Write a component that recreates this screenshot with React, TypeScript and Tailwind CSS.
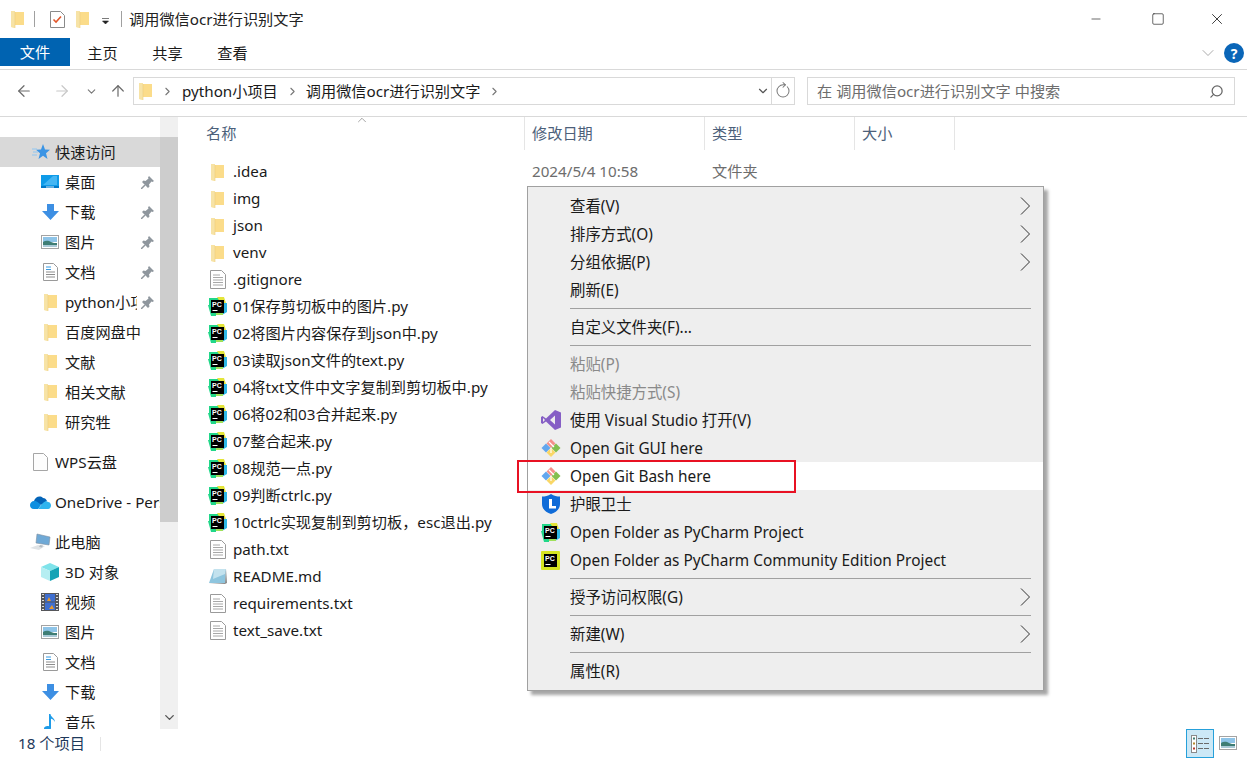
import { ChevronDown, ChevronRight, ChevronUp, ArrowLeft, ArrowRight, ArrowUp, RotateCw, Search, Minus, X, Square } from "lucide-react";

function FolderIcon({ className = "" }: { className?: string }) {
  return (
    <svg width="13" height="18" viewBox="0 0 13 18" className={className}>
      <path d="M0 1h4v1h9v13H4v3l-4-1z" fill="#fbe7ad" />
      <path d="M4 2h9v13H4z" fill="#fbdc8a" />
      <path d="M0 1h4v17l-4-1z" fill="#f7e3a6" />
      <path d="M4 2v16" stroke="#eccf7d" strokeWidth=".6" />
    </svg>
  );
}

function TextFileIcon() {
  return (
    <svg width="16" height="19" viewBox="0 0 16 19">
      <path d="M.5.5h11l4 4v14H.5z" fill="#fff" stroke="#9a9a9a" />
      <path d="M3 5h7M3 7.5h10M3 10h10M3 12.5h10M3 15h10" stroke="#a8a8a8" />
    </svg>
  );
}

function PyCharmIcon({ community = false }: { community?: boolean }) {
  return (
    <svg width="19" height="19" viewBox="0 0 19 19">
      {community ? (
        <rect x="0" y="0" width="19" height="19" rx="1" fill="#d6e421" />
      ) : (
        <>
          <path d="M1 1h10v10H1z" fill="#21d789" />
          <path d="M9 0h7l2 6-4 2z" fill="#e4e53a" />
          <path d="M13 6h6v9l-5 3z" fill="#2fb8e6" />
          <path d="M0 8h8v11H3z" fill="#21d789" />
          <path d="M8 15h7v3H8z" fill="#9fe05a" />
        </>
      )}
      <rect x="3" y="3" width="13" height="13" fill="#000" />
      <text x="4" y="10" fontSize="7" fontWeight="700" fill="#fff" fontFamily="Liberation Sans, sans-serif">PC</text>
      <rect x="4.500" y="13" width="5" height="1" fill="#fff" />
    </svg>
  );
}

function ReadmeIcon() {
  return (
    <svg width="19" height="17" viewBox="0 0 19 17">
      <path d="M6 1h12l-1 14H1z" fill="#8ec5de" />
      <path d="M6 1h12l-1 5-12 5z" fill="#c3e2ee" />
      <path d="M18 1l1 14-2 1H1l16-1z" fill="#8a8a8a" />
    </svg>
  );
}

function GitIcon() {
  return (
    <svg width="20" height="20" viewBox="0 0 20 20">
      <path d="M10 1l4.500 4.500-4.500 4.500-4.500-4.500z" fill="#f4908a" />
      <path d="M5 5.500l4.500 4.500L5 14.500.5 10z" fill="#62a7ee" />
      <path d="M15 5.500l4.500 4.500-4.500 4.500-4.500-4.500z" fill="#83bf4f" />
      <path d="M10 10l4.500 4.500L10 19l-4.500-4.500z" fill="#f9d767" />
      <path d="M8 4l5 5M10 10l0 5" stroke="#fff" strokeWidth="1.200" />
    </svg>
  );
}

function VisualStudioIcon() {
  return (
    <svg width="20" height="20" viewBox="0 0 20 20">
      <path d="M14 0l6 2.500v15L14 20 5 11.500 1.500 14 0 13V7l1.500-1L5 8.500zM14 5.500L9 10l5 4.500zM2 8v4l2-2z" fill="#865fc5" />
    </svg>
  );
}

function EyeGuardIcon() {
  return (
    <svg width="18" height="20" viewBox="0 0 18 20">
      <path d="M9 0c3 2 6 2.500 9 2.500V10c0 5-4 8.500-9 10-5-1.500-9-5-9-10V2.500C3 2.500 6 2 9 0z" fill="#0f6bd8" />
      <path d="M7 5h3v7h4v2.500H7z" fill="#fff" />
    </svg>
  );
}

function StarIcon() {
  return (
    <svg width="18" height="16" viewBox="0 0 18 16">
      <path d="M11 0l2 5.500 5 .3-4 3.400 1.500 5.800-4.500-3.200L6.500 15 8 9.200 4 5.800l5-.3z" fill="#3b94e4" />
      <path d="M0 5h5M1 8h5M0 11h5" stroke="#8fc6f2" />
    </svg>
  );
}

function DesktopIcon() {
  return (
    <svg width="18" height="14" viewBox="0 0 18 14">
      <rect width="18" height="13" fill="#0f9be8" />
      <path d="M2 10L12 1h4v9z" fill="#45b6f3" />
      <rect x="0" y="11" width="18" height="2" fill="#0078c8" />
      <rect x="5" y="11.500" width="8" height="1" fill="#cfeaf9" />
    </svg>
  );
}

function DownloadIcon() {
  return (
    <svg width="17" height="16" viewBox="0 0 17 16">
      <path d="M5 0h7v7h5l-8.500 9L0 7h5z" fill="#3d8fe3" />
    </svg>
  );
}

function PictureIcon() {
  return (
    <svg width="18" height="14" viewBox="0 0 18 14">
      <rect x=".5" y=".5" width="17" height="13" fill="#fff" stroke="#a3a3a3" />
      <rect x="2" y="2" width="14" height="5" fill="#8ec4e8" />
      <path d="M2 7c3-2 6-1 8 0s4 1 6 1v4H2z" fill="#3e7d74" />
      <path d="M2 10h14v2H2z" fill="#a9c9d6" />
    </svg>
  );
}

function DocsIcon() {
  return (
    <svg width="15" height="18" viewBox="0 0 15 18">
      <path d="M.5.500h10l4 4v13H.5z" fill="#fff" stroke="#9a9a9a" />
      <path d="M3 4h5M3 6.500h5" stroke="#3a9be0" />
      <path d="M3 9h9M3 11.500h9M3 14h9" stroke="#8d8d8d" />
    </svg>
  );
}

function WpsIcon() {
  return (
    <svg width="15" height="18" viewBox="0 0 15 18">
      <path d="M.5.500h10l4 4v13H.5z" fill="#fdfdfd" stroke="#a6a6a6" />
    </svg>
  );
}

function OneDriveIcon() {
  return (
    <svg width="21" height="13" viewBox="0 0 21 13">
      <path d="M4 5c1-4 6-6 9-3 2 0 3 1 4 3l-6 4z" fill="#0364b8" />
      <path d="M4 13C1 13 0 11 0 9s2-4 4-4c2-.500 4 1 7 4l-3 4z" fill="#0f8fe0" />
      <path d="M8 13l5-6c2-2 4-2 5-1 2 0 3 2 3 3.500S20 13 18 13z" fill="#2fb4ef" />
    </svg>
  );
}

function PcIcon() {
  return (
    <svg width="21" height="18" viewBox="0 0 21 18">
      <path d="M7 1l13 3-1 8-13-2z" fill="#6fa9d6" stroke="#7d8fa0" strokeWidth=".6" />
      <path d="M0 15l8-3 7 1-6 4z" fill="#dfe3e6" />
      <path d="M10 12l3 .500-1 2-3-.500z" fill="#b7bec3" />
    </svg>
  );
}

function CubeIcon() {
  return (
    <svg width="18" height="18" viewBox="0 0 18 18">
      <path d="M9 0l9 4-9 4-9-4z" fill="#7fe3ea" />
      <path d="M0 4l9 4v10l-9-4z" fill="#b5eef2" />
      <path d="M18 4L9 8v10l9-4z" fill="#14a3b5" />
    </svg>
  );
}

function FilmIcon() {
  return (
    <svg width="18" height="18" viewBox="0 0 18 18">
      <rect width="18" height="18" fill="#55565a" />
      <path d="M1 1.500h2M1 4.500h2M1 7.500h2M1 10.500h2M1 13.500h2M1 16.500h2M15 1.500h2M15 4.500h2M15 7.500h2M15 10.500h2M15 13.500h2M15 16.500h2" stroke="#ddd" />
      <rect x="4" y="1" width="10" height="7.500" fill="#3f6fd0" />
      <rect x="4" y="9.500" width="10" height="7.500" fill="#3f6fd0" />
      <path d="M6 8l2-4 2 4zM8 16l3-4 2 4z" fill="#e89a2e" />
    </svg>
  );
}

function MusicIcon() {
  return (
    <svg width="12" height="17" viewBox="0 0 12 17">
      <path d="M5 0h1.500c0 3 4.500 4 4.500 8-1-2-2.500-3-4-3.300V14c0 1.700-1.600 3-3.500 3S0 16 0 14.500 1.600 12 3.500 12c.500 0 1 .100 1.500.300z" fill="#1e9be8" />
    </svg>
  );
}

function PinIcon() {
  return (
    <svg width="13" height="13" viewBox="0 0 13 13" className="ml-[4px] shrink-0">
      <path d="M8 0l5 5-1.500 1-1-.5L8 8.500l.5 2L7 12 1 6l1.500-1.500 2 .5L7.500 2.500 7 1.500z" fill="#8f979e" />
      <path d="M4 9l-4 4" stroke="#8f979e" strokeWidth="1.500" />
    </svg>
  );
}

function MenuArrow() {
  return (
    <svg width="10" height="18" viewBox="0 0 10 18" className="mr-[13px]">
      <path d="M1 .500L9.500 9 1 17.500" fill="none" stroke="#333" strokeWidth="1" />
    </svg>
  );
}

type NavRow = { label: string; icon: React.ReactNode; pinned?: boolean; top?: boolean; active?: boolean; gap?: boolean };

const navRows: NavRow[] = [
  { label: "快速访问", icon: <StarIcon />, top: true, active: true },
  { label: "桌面", icon: <DesktopIcon />, pinned: true },
  { label: "下载", icon: <DownloadIcon />, pinned: true },
  { label: "图片", icon: <PictureIcon />, pinned: true },
  { label: "文档", icon: <DocsIcon />, pinned: true },
  { label: "python小项目", icon: <FolderIcon />, pinned: true },
  { label: "百度网盘中", icon: <FolderIcon /> },
  { label: "文献", icon: <FolderIcon /> },
  { label: "相关文献", icon: <FolderIcon /> },
  { label: "研究牲", icon: <FolderIcon /> },
  { label: "WPS云盘", icon: <WpsIcon />, top: true, gap: true },
  { label: "OneDrive - Personal", icon: <OneDriveIcon />, top: true, gap: true },
  { label: "此电脑", icon: <PcIcon />, top: true, gap: true },
  { label: "3D 对象", icon: <CubeIcon /> },
  { label: "视频", icon: <FilmIcon /> },
  { label: "图片", icon: <PictureIcon /> },
  { label: "文档", icon: <DocsIcon /> },
  { label: "下载", icon: <DownloadIcon /> },
  { label: "音乐", icon: <MusicIcon /> },
];

const files: { name: string; icon: React.ReactNode }[] = [
  { name: ".idea", icon: <FolderIcon /> },
  { name: "img", icon: <FolderIcon /> },
  { name: "json", icon: <FolderIcon /> },
  { name: "venv", icon: <FolderIcon /> },
  { name: ".gitignore", icon: <TextFileIcon /> },
  { name: "01保存剪切板中的图片.py", icon: <PyCharmIcon /> },
  { name: "02将图片内容保存到json中.py", icon: <PyCharmIcon /> },
  { name: "03读取json文件的text.py", icon: <PyCharmIcon /> },
  { name: "04将txt文件中文字复制到剪切板中.py", icon: <PyCharmIcon /> },
  { name: "06将02和03合并起来.py", icon: <PyCharmIcon /> },
  { name: "07整合起来.py", icon: <PyCharmIcon /> },
  { name: "08规范一点.py", icon: <PyCharmIcon /> },
  { name: "09判断ctrlc.py", icon: <PyCharmIcon /> },
  { name: "10ctrlc实现复制到剪切板，esc退出.py", icon: <PyCharmIcon /> },
  { name: "path.txt", icon: <TextFileIcon /> },
  { name: "README.md", icon: <ReadmeIcon /> },
  { name: "requirements.txt", icon: <TextFileIcon /> },
  { name: "text_save.txt", icon: <TextFileIcon /> },
];

function MenuItem({ label, icon, arrow, disabled, active }: { label: string; icon?: React.ReactNode; arrow?: boolean; disabled?: boolean; active?: boolean }) {
  return (
    <div className={`flex h-7 items-center ${active ? "bg-white" : ""}`}>
      <div className="flex w-[42px] shrink-0 items-center justify-center pl-[3px]">{icon}</div>
      <span className={`flex-1 whitespace-nowrap pt-[2px] ${disabled ? "text-[#8a8a8a]" : "text-[#1a1a1a]"}`}>{label}</span>
      {arrow && <MenuArrow />}
    </div>
  );
}

function MenuSep() {
  return (
    <div className="flex h-[9px] items-center pl-[42px] pr-[12px]">
      <div className="h-px w-full bg-[#a0a0a0]" />
    </div>
  );
}

function ContextMenu() {
  return (
    <div className="absolute left-[527px] top-[186px] w-[517px] border border-[#a0a0a0] bg-[#eeeeee] py-[5px] text-[15.4px] shadow-[4px_4px_3px_rgba(0,0,0,0.35)]">
      <MenuItem label="查看(V)" arrow />
      <MenuItem label="排序方式(O)" arrow />
      <MenuItem label="分组依据(P)" arrow />
      <MenuItem label="刷新(E)" />
      <MenuSep />
      <MenuItem label="自定义文件夹(F)..." />
      <MenuSep />
      <MenuItem label="粘贴(P)" disabled />
      <MenuItem label="粘贴快捷方式(S)" disabled />
      <MenuItem label="使用 Visual Studio 打开(V)" icon={<VisualStudioIcon />} />
      <MenuItem label="Open Git GUI here" icon={<GitIcon />} />
      <MenuItem label="Open Git Bash here" icon={<GitIcon />} active />
      <MenuItem label="护眼卫士" icon={<EyeGuardIcon />} />
      <MenuItem label="Open Folder as PyCharm Project" icon={<PyCharmIcon />} />
      <MenuItem label="Open Folder as PyCharm Community Edition Project" icon={<PyCharmIcon community />} />
      <MenuSep />
      <MenuItem label="授予访问权限(G)" arrow />
      <MenuSep />
      <MenuItem label="新建(W)" arrow />
      <MenuSep />
      <MenuItem label="属性(R)" />
    </div>
  );
}

export default function App() {
  return (
    <div className="relative flex h-[758px] w-[1247px] flex-col overflow-hidden bg-white font-['Noto_Sans','Noto_Sans_CJK_SC',sans-serif] text-[15.2px] text-[#1a1a1a]">
      {/* title bar */}
      <div className="flex h-[38px] items-center pl-[11px]">
        <FolderIcon />
        <div className="ml-[10px] h-[16px] w-px bg-[#a0a0a0]" />
        <svg width="15" height="17" viewBox="0 0 15 17" className="ml-[15px]">
          <path d="M.5.500h10l4 4v12H.5z" fill="#fff" stroke="#8a8a8a" />
          <path d="M3.500 8.500l2.500 2.500 5-5.500" fill="none" stroke="#e2572a" strokeWidth="1.600" />
        </svg>
        <FolderIcon className="ml-[11px]" />
        <svg width="7" height="6" viewBox="0 0 7 6" className="ml-[13px] mt-[3px]">
          <path d="M0 .500h7M.5 3h6L3.500 6z" fill="#222" stroke="#222" strokeWidth=".6" />
        </svg>
        <div className="ml-[12px] h-[16px] w-px bg-[#a0a0a0]" />
        <span className="ml-[7px] text-[#222]">调用微信ocr进行识别文字</span>
        <div className="ml-auto flex items-center text-black">
          <Minus size={14} strokeWidth={1} className="mr-[48px]" />
          <Square size={14} strokeWidth={1} className="mr-[43px]" />
          <X size={18} strokeWidth={1} className="mr-[21px]" />
        </div>
      </div>

      {/* ribbon tabs */}
      <div className="flex h-[28px] items-center">
        <div className="flex h-full w-[70px] items-center justify-center bg-[#0063b1] text-white">文件</div>
        <div className="flex w-[65px] justify-center pt-[2px]">主页</div>
        <div className="flex w-[65px] justify-center pt-[2px]">共享</div>
        <div className="flex w-[65px] justify-center pt-[2px]">查看</div>
        <ChevronDown size={20} strokeWidth={1} className="ml-auto mr-[6px] mt-[2px] text-[#9a9a9a]" />
        <div className="mr-[3px] mt-[2px] flex h-[20px] w-[20px] items-center justify-center rounded-full bg-[#0a66b8] text-[14px] font-bold text-white">?</div>
      </div>

      {/* address bar */}
      <div className="mt-[3px] flex h-[48px] items-center border-y border-[#d9d9d9] pb-[4px] pl-[15px]">
        <ArrowLeft size={18} strokeWidth={1.6} className="text-[#6a6a6a]" />
        <ArrowRight size={18} strokeWidth={1.6} className="ml-[20px] text-[#c8c8c8]" />
        <ChevronDown size={13} strokeWidth={2} className="ml-[14px] text-[#777]" />
        <ArrowUp size={18} strokeWidth={1.6} className="ml-[11px] text-[#6a6a6a]" />
        <div className="ml-[6px] flex h-[28px] w-[662px] items-center border border-[#d9d9d9] pl-[5px]">
          <FolderIcon />
          <ChevronRight size={13} strokeWidth={2} className="ml-[9px] text-[#777]" />
          <span className="ml-[8px]">python小项目</span>
          <ChevronRight size={13} strokeWidth={2} className="ml-[8px] text-[#777]" />
          <span className="ml-[7px]">调用微信ocr进行识别文字</span>
          <ChevronRight size={13} strokeWidth={2} className="ml-[8px] text-[#777]" />
          <ChevronDown size={14} strokeWidth={2} className="ml-auto text-[#555]" />
          <div className="ml-[1px] h-full w-px bg-[#d9d9d9]" />
          <RotateCw size={16} strokeWidth={1.5} className="mx-[3px] -rotate-45 text-[#777]" />
        </div>
        <div className="ml-[12px] flex h-[28px] w-[428px] items-center border border-[#d9d9d9] pl-[9px] pr-[10px] text-[#6d6d6d]">
          <span>在 调用微信ocr进行识别文字 中搜索</span>
          <Search size={15} strokeWidth={2} className="ml-auto -scale-x-100 text-[#666]" />
        </div>
      </div>

      {/* body */}
      <div className="flex h-[612px] overflow-hidden">
        <div className="w-[160px] shrink-0 overflow-hidden pt-[20px]">
          {navRows.map((row, i) => (
            <div
              key={i}
              className={`flex h-[30px] items-center ${row.top ? "pl-[30px]" : "pl-[41px]"} ${row.active ? "bg-[#d9d9d9]" : ""} ${row.gap ? "mt-[10px]" : ""}`}
            >
              <div className={`flex shrink-0 items-center justify-center ${row.top ? "w-[21px]" : "w-[18px]"}`}>{row.icon}</div>
              <span className={`ml-[4px] overflow-hidden whitespace-nowrap ${row.top ? "" : "pl-[2px]"} ${row.pinned ? "w-[74px]" : "flex-1"}`}>{row.label}</span>
              {row.pinned && <PinIcon />}
            </div>
          ))}
        </div>

        {/* nav scrollbar */}
        <div className="flex w-[18px] shrink-0 flex-col bg-[#f0f0f0]">
          <div className="h-[20px]" />
          <div className="h-[385px] bg-[#cdcdcd]" />
          <ChevronDown size={15} strokeWidth={2.2} className="ml-[2px] mt-[188px] text-[#555]" />
        </div>

        {/* file list */}
        <div className="min-w-0 flex-1">
          <div className="relative flex h-[33px] text-[#4c607a]">
            <div className="relative w-[347px] border-r border-[#e5e5e5] pl-[28px] pt-[5px]">
              名称
              <ChevronUp size={14} strokeWidth={1} className="absolute left-[177px] top-[-4px] text-[#666]" />
            </div>
            <div className="w-[180px] border-r border-[#e5e5e5] pl-[7px] pt-[5px]">修改日期</div>
            <div className="w-[150px] border-r border-[#e5e5e5] pl-[7px] pt-[5px]">类型</div>
            <div className="w-[100px] border-r border-[#e5e5e5] pl-[7px] pt-[5px]">大小</div>
          </div>
          <div className="pt-[8px]">
            {files.map((f, i) => (
              <div key={f.name} className="flex h-[27px] items-center">
                <div className="ml-[30px] flex w-[19px] shrink-0 items-center justify-center">{f.icon}</div>
                <span className="ml-[6px] w-[299px] shrink-0 whitespace-nowrap">{f.name}</span>
                {i === 0 && (
                  <>
                    <span className="w-[180px] text-[#6d6d6d]">2024/5/4 10:58</span>
                    <span className="text-[#6d6d6d]">文件夹</span>
                  </>
                )}
              </div>
            ))}
          </div>
        </div>
      </div>

      {/* status bar */}
      <div className="flex h-[29px] items-center pl-[18px] text-[#1e395b]">
        <span>18 个项目</span>
        <div className="ml-[15px] h-[14px] w-px bg-[#e5e5e5]" />
        <div className="ml-auto mr-[33px] flex h-[29px] w-[28px] items-center justify-center border border-[#26a0da] bg-[#cce8f6]">
          <svg width="18" height="18" viewBox="0 0 18 18">
            <rect x=".5" y=".5" width="5" height="17" fill="#fff" stroke="#8a8a8a" />
            <rect x="2" y="2.500" width="2" height="2" fill="#3e7d74" />
            <rect x="2" y="7.500" width="2" height="2" fill="#b68a2e" />
            <rect x="2" y="12.500" width="2" height="2" fill="#b8382e" />
            <path d="M7 3.500h5M13 3.500h5M7 8.500h5M13 8.500h5M7 13.500h5M13 13.500h5" stroke="#6a6a6a" />
          </svg>
        </div>
      </div>
      <div className="absolute left-[1219px] top-[736px]">
        <PictureIcon />
      </div>

      <ContextMenu />
      {/* red highlight box */}
      <div className="absolute left-[517px] top-[460px] h-[33px] w-[279px] border-2 border-[#e81123]" />
    </div>
  );
}
